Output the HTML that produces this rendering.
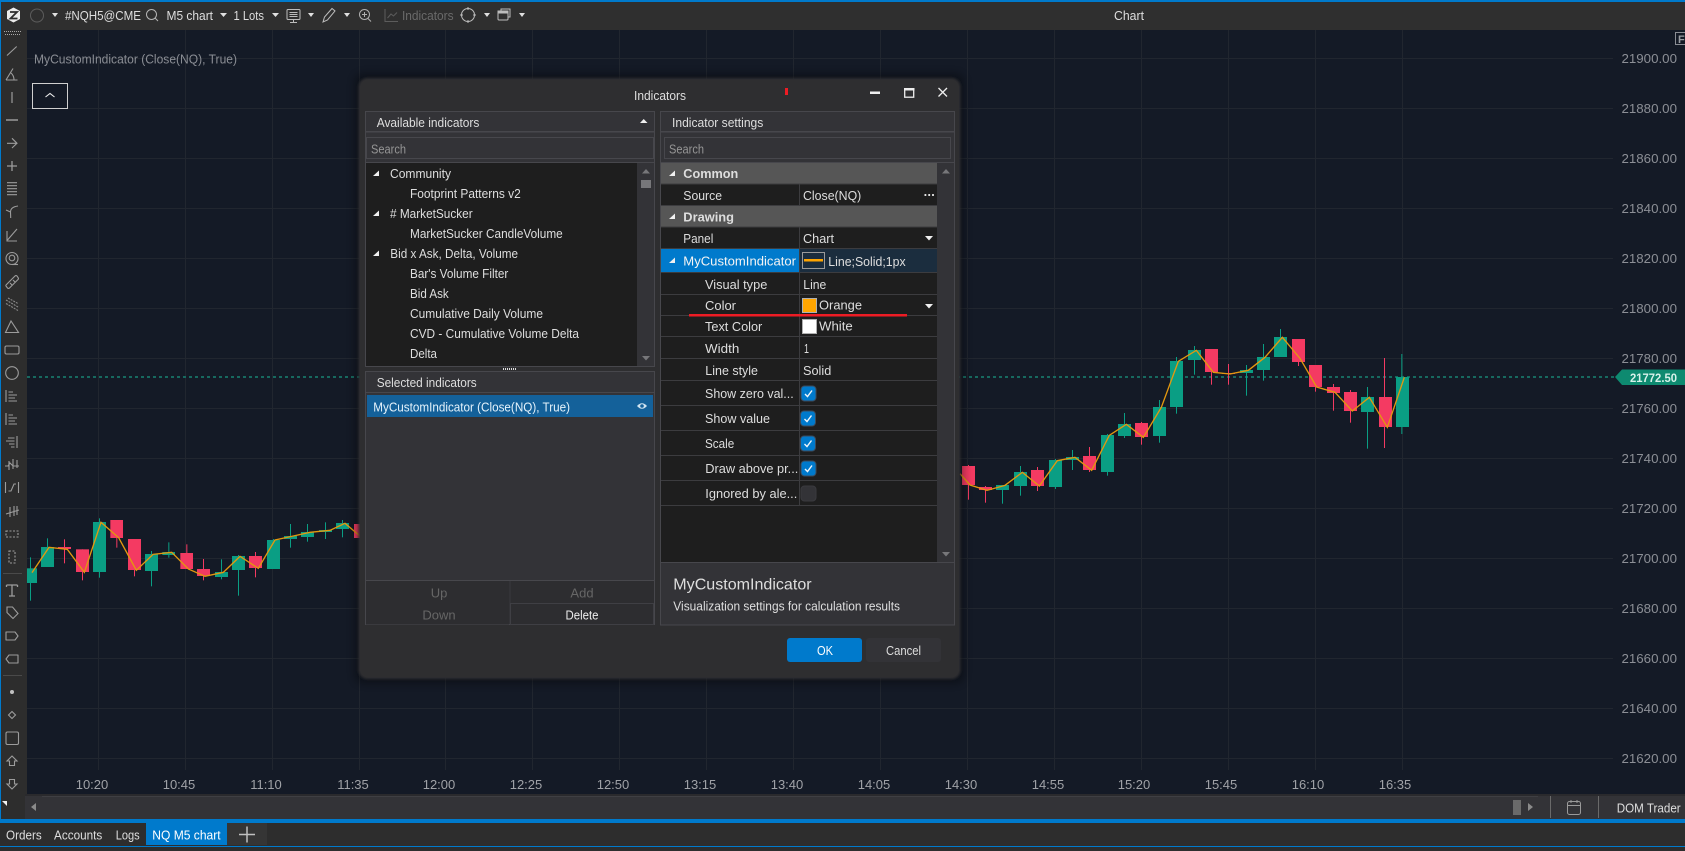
<!DOCTYPE html>
<html><head><meta charset="utf-8"><title>Chart</title>
<style>
html,body{margin:0;padding:0;background:#141a26;width:1685px;height:851px;overflow:hidden}
svg{display:block}
text{font-family:"Liberation Sans",sans-serif;font-size:13px;fill:#dedede}
.ax{fill:#8c8f96;font-size:13.3px}
.t{fill:#a0a2a7;font-size:13px;text-anchor:middle}
.dis{fill:#666;text-anchor:middle}
.ph{fill:#959595}
.b{font-weight:bold}
.ic{fill:none;stroke:#9c9c9c;stroke-width:1.1}
.g{fill:#0a9e84}.r{fill:#f43a62}
</style></head><body>
<svg xmlns="http://www.w3.org/2000/svg" width="1685" height="851" viewBox="0 0 1685 851">
<defs><filter id="sh" x="-5%" y="-5%" width="110%" height="110%"><feGaussianBlur stdDeviation="4"/></filter>
<filter id="sh2" x="-5%" y="-5%" width="110%" height="110%"><feGaussianBlur stdDeviation="1.2"/></filter></defs>
<rect width="1685" height="851" fill="#141a26"/>

<!-- grid -->
<g stroke="#21262f" stroke-width="1">
<path d="M27 58.5H1613M27 108.5H1613M27 158.5H1613M27 208.5H1613M27 258.5H1613M27 308.5H1613M27 358.5H1613M27 408.5H1613M27 458.5H1613M27 508.5H1613M27 558.5H1613M27 608.5H1613M27 658.5H1613M27 708.5H1613M27 758.5H1613"/>
<path d="M98.5 30V770M185.5 30V770M272.5 30V770M359.5 30V770M445.5 30V770M532.5 30V770M619.5 30V770M706.5 30V770M793.5 30V770M880.5 30V770M967.5 30V770M1054.5 30V770M1141.5 30V770M1228.5 30V770M1315.5 30V770M1402.5 30V770"/>
</g>
<path d="M27 377H1615" stroke="#17695f" stroke-width="2" stroke-dasharray="3 3"/>

<!-- candles left -->
<g transform="translate(0,500) scale(.33333)">
<g fill="#0a9e84">
<rect x="81" y="205" width="30" height="44"/><rect x="90" y="172" width="3" height="130"/>
<rect x="123" y="141" width="39" height="60"/><rect x="141" y="115" width="3" height="30"/>
<rect x="279" y="66" width="39" height="150"/><rect x="297" y="55" width="3" height="178"/>
<rect x="435" y="162" width="39" height="51"/><rect x="453" y="153" width="3" height="106"/>
<rect x="487" y="156" width="38" height="9"/><rect x="505" y="127" width="3" height="46"/>
<rect x="645" y="216" width="39" height="15"/><rect x="663" y="178" width="3" height="60"/>
<rect x="696" y="168" width="39" height="42"/><rect x="714" y="165" width="3" height="122"/>
<rect x="801" y="120" width="39" height="87"/><rect x="819" y="117" width="3" height="6"/>
<rect x="852" y="108" width="39" height="9"/><rect x="870" y="72" width="3" height="71"/>
<rect x="903" y="96" width="39" height="15"/><rect x="921" y="72" width="3" height="53"/>
<rect x="957" y="90" width="39" height="6"/><rect x="975" y="67" width="3" height="50"/>
<rect x="1008" y="69" width="39" height="18"/><rect x="1026" y="60" width="3" height="52"/>
</g>
<g fill="#f43a62">
<rect x="174" y="141" width="39" height="6"/><rect x="192" y="118" width="3" height="72"/>
<rect x="228" y="148" width="39" height="68"/><rect x="246" y="148" width="3" height="93"/>
<rect x="331" y="60" width="38" height="54"/><rect x="349" y="100" width="3" height="43"/>
<rect x="384" y="117" width="39" height="93"/><rect x="402" y="200" width="3" height="29"/>
<rect x="541" y="159" width="38" height="48"/><rect x="559" y="133" width="3" height="40"/>
<rect x="591" y="207" width="39" height="21"/><rect x="609" y="177" width="3" height="64"/>
<rect x="747" y="168" width="39" height="36"/><rect x="765" y="156" width="3" height="76"/>
<rect x="1062" y="72" width="18" height="42"/>
</g>
<polyline fill="none" stroke="#e3980f" stroke-width="4" points="96,218 147,142 202,148 253,217 303,67 356,113 409,211 459,163 515,157 565,207 615,229 670,217 720,169 775,205 825,120 880,108 930,97 990,91 1035,70 1080,108"/>
</g>

<!-- candles right -->
<g transform="translate(950,320) scale(.33333)">
<g fill="#0a9e84">
<rect x="138" y="495" width="39" height="15"/><rect x="156" y="495" width="3" height="56"/>
<rect x="192" y="456" width="39" height="42"/><rect x="210" y="438" width="3" height="89"/>
<rect x="297" y="420" width="39" height="81"/><rect x="315" y="417" width="3" height="90"/>
<rect x="348" y="411" width="39" height="9"/><rect x="366" y="390" width="3" height="60"/>
<rect x="453" y="345" width="39" height="111"/><rect x="471" y="342" width="3" height="125"/>
<rect x="504" y="312" width="39" height="36"/><rect x="522" y="279" width="3" height="75"/>
<rect x="609" y="261" width="39" height="87"/><rect x="627" y="240" width="3" height="128"/>
<rect x="660" y="123" width="39" height="138"/><rect x="678" y="111" width="3" height="170"/>
<rect x="714" y="90" width="39" height="30"/><rect x="732" y="78" width="3" height="86"/>
<rect x="870" y="150" width="39" height="9"/><rect x="888" y="135" width="3" height="92"/>
<rect x="921" y="111" width="39" height="39"/><rect x="939" y="72" width="3" height="110"/>
<rect x="972" y="51" width="39" height="60"/><rect x="990" y="27" width="3" height="30"/>
<rect x="1233" y="231" width="39" height="45"/><rect x="1251" y="201" width="3" height="185"/>
<rect x="1338" y="171" width="39" height="150"/><rect x="1354" y="102" width="3" height="240"/>
</g>
<g fill="#f43a62">
<rect x="36" y="438" width="39" height="57"/><rect x="54" y="435" width="3" height="104"/>
<rect x="87" y="501" width="39" height="9"/><rect x="105" y="498" width="3" height="50"/>
<rect x="243" y="450" width="39" height="48"/><rect x="261" y="441" width="3" height="72"/>
<rect x="399" y="408" width="39" height="42"/><rect x="417" y="381" width="3" height="75"/>
<rect x="555" y="309" width="39" height="42"/><rect x="573" y="306" width="3" height="68"/>
<rect x="765" y="87" width="39" height="69"/><rect x="783" y="87" width="3" height="107"/>
<rect x="816" y="159" width="39" height="3"/><rect x="834" y="132" width="3" height="62"/>
<rect x="1026" y="57" width="39" height="69"/><rect x="1044" y="57" width="3" height="81"/>
<rect x="1077" y="135" width="39" height="66"/><rect x="1095" y="135" width="3" height="80"/>
<rect x="1131" y="201" width="39" height="18"/><rect x="1149" y="192" width="3" height="80"/>
<rect x="1182" y="216" width="39" height="57"/><rect x="1200" y="210" width="3" height="98"/>
<rect x="1287" y="231" width="39" height="90"/><rect x="1302" y="114" width="3" height="270"/>
</g>
<polyline fill="none" stroke="#e3980f" stroke-width="4" points="30,461 60,495 111,511 165,496 217,457 268,498 322,422 375,412 425,451 478,346 529,313 580,352 634,262 685,124 739,91 790,157 840,162 895,151 945,112 997,52 1050,115 1100,201 1155,217 1207,273 1258,232 1312,322 1363,172"/>
</g>

<!-- axis labels -->
<g transform="translate(-.5,0)">
<text class="ax" x="1622" y="63">21900.00</text><text class="ax" x="1622" y="113">21880.00</text><text class="ax" x="1622" y="163">21860.00</text><text class="ax" x="1622" y="213">21840.00</text><text class="ax" x="1622" y="263">21820.00</text><text class="ax" x="1622" y="313">21800.00</text><text class="ax" x="1622" y="363">21780.00</text><text class="ax" x="1622" y="413">21760.00</text><text class="ax" x="1622" y="463">21740.00</text><text class="ax" x="1622" y="513">21720.00</text><text class="ax" x="1622" y="563">21700.00</text><text class="ax" x="1622" y="613">21680.00</text><text class="ax" x="1622" y="663">21660.00</text><text class="ax" x="1622" y="713">21640.00</text><text class="ax" x="1622" y="763">21620.00</text>
</g>
<polygon points="1615,377 1622,369.5 1685,369.5 1685,385 1622,385" fill="#0e8a70"/>
<text x="1630" y="382" style="fill:#d8f2ea;font-size:12px" textLength="47" lengthAdjust="spacingAndGlyphs" class="b">21772.50</text>
<rect x="1675.5" y="32.5" width="12" height="12" fill="none" stroke="#8a8d94"/>
<text x="1678" y="43" style="fill:#9a9da3;font-size:11px" class="b">F</text>

<text class="t" x="92" y="789">10:20</text><text class="t" x="179" y="789">10:45</text><text class="t" x="266" y="789">11:10</text><text class="t" x="353" y="789">11:35</text><text class="t" x="439" y="789">12:00</text><text class="t" x="526" y="789">12:25</text><text class="t" x="613" y="789">12:50</text><text class="t" x="700" y="789">13:15</text><text class="t" x="787" y="789">13:40</text><text class="t" x="874" y="789">14:05</text><text class="t" x="961" y="789">14:30</text><text class="t" x="1048" y="789">14:55</text><text class="t" x="1134" y="789">15:20</text><text class="t" x="1221" y="789">15:45</text><text class="t" x="1308" y="789">16:10</text><text class="t" x="1395" y="789">16:35</text>

<text x="34" y="63.5" style="fill:#8a8d94;font-size:12.5px" textLength="203" lengthAdjust="spacingAndGlyphs">MyCustomIndicator (Close(NQ), True)</text>
<rect x="32.5" y="83.5" width="35" height="25" fill="#141a26" stroke="#d0d0d0"/>
<path d="M45.5 97L50 93.5L54.5 97" fill="none" stroke="#eee" stroke-width="1.1"/>

<!-- top toolbar -->
<rect x="0" y="0" width="1685" height="30" fill="#2f2f2f"/>
<rect x="0" y="0" width="1685" height="2" fill="#007acc"/>
<polygon points="13.500,7.500 20,11 20,19 13.500,22.500 7,19 7,11" fill="#ececec"/><path d="M10 12H17L10.500 18.500H17.500" fill="none" stroke="#2f2f2f" stroke-width="1.800"/>
<circle cx="37" cy="15.5" r="6.5" fill="none" stroke="#5c5c5c"/>
<polygon points="52,13 58,13 55,17" fill="#e0e0e0"/>
<text x="65" y="20" textLength="76" lengthAdjust="spacingAndGlyphs">#NQH5@CME</text>
<circle cx="151.5" cy="14.5" r="5" fill="none" stroke="#b5b5b5"/><path d="M155 18L158 21" stroke="#b5b5b5"/>
<text x="166.500" y="20" textLength="46.500" lengthAdjust="spacingAndGlyphs">M5 chart</text>
<polygon points="220,13 227,13 223.500,17" fill="#e0e0e0"/>
<text x="233.500" y="20" textLength="30.500" lengthAdjust="spacingAndGlyphs">1 Lots</text>
<polygon points="272,13 279,13 275.500,17" fill="#e0e0e0"/>
<g fill="none" stroke="#bcbcbc"><rect x="287" y="9.500" width="13" height="10" rx="1"/><path d="M289.500 12.500H297.500M289.500 14.500H297.500M289.500 16.500H297.500M293.500 20V22M290 22.500H297"/></g>
<polygon points="308,13 314,13 311,17" fill="#e0e0e0"/>
<path d="M323 22L324.500 17L332 8.500L335 11L327.500 20Z" fill="none" stroke="#bcbcbc"/>
<polygon points="344,13 350,13 347,17" fill="#e0e0e0"/>
<g fill="none" stroke="#b0b0b0"><circle cx="364.500" cy="14.500" r="5"/><path d="M362 14.500H367M364.500 12V17M368 18.500L371 21.500"/></g>
<g fill="none" stroke="#5c5c5c"><path d="M385 9V21.500H398M387.500 18L391 14L393.500 16L397 12.500"/></g>
<text x="402" y="20" style="fill:#6a6a6a" textLength="51.600" lengthAdjust="spacingAndGlyphs">Indicators</text>
<g fill="none" stroke="#bcbcbc"><circle cx="468" cy="15" r="6.500"/><path d="M468 7V10M468 20V23M460 15H463M473 15H476"/></g>
<polygon points="484,13 490,13 487,17" fill="#e0e0e0"/>
<g fill="none" stroke="#bcbcbc"><rect x="498" y="11" width="10" height="9" rx="1"/><path d="M501 11V9H510V17H508"/><path d="M498 11H508V13H498Z" fill="#bcbcbc"/></g>
<polygon points="519,13 525,13 522,17" fill="#e0e0e0"/>
<text x="1114" y="20" textLength="30" lengthAdjust="spacingAndGlyphs">Chart</text>

<!-- left toolbar -->
<rect x="0" y="30" width="27" height="789" fill="#2d2d2d"/>
<rect x="0" y="0" width="1" height="823" fill="#007acc"/>
<path d="M4 31.500H21M5 34.500H21" stroke="#a8a8a8" stroke-dasharray="1 1"/>
<g class="ic">
<path d="M7 55.500L16.700 46.500"/>
<path d="M6 80L13 68.500M6 80H17.500M11 73Q14 75.500 14 80"/>
<path d="M12 92V103" stroke-width="1.800" stroke="#777"/>
<path d="M6 120H18" stroke-width="1.800" stroke="#888"/>
<path d="M7 143.300H17M12 138.300L17 143.300L12 148"/>
<path d="M7 166H17M12 161V171" stroke-width="1.300"/>
<path d="M7 182.700H17M7 185.700H17M7 188.700H17M7 191.700H17M7 194.700H17"/>
<path d="M10.700 218L10.500 212Q10.500 207 18 206M6 210L10.500 212"/>
<path d="M7.500 240L17 229M7 231V241H17"/>
<circle cx="12" cy="258.500" r="6"/><circle cx="12" cy="258" r="2.800"/><path d="M12 264.500H18"/>
<path d="M6.500 284.500L15 276Q16 275 17 276L18 277.500Q19 278.500 18 279.500L9.500 288Q8.500 289 7.500 288L6 286Q5.500 285.500 6.500 284.500ZM10 283L12 285M13 280L15 282"/>
<path d="M6 300L18 307M6 303.500L18 310.500M8 298L18 303.500" stroke-dasharray="2 1" stroke="#888"/>
<path d="M5.500 332.500L11 321L18.500 332.500Z"/>
<rect x="5" y="346" width="14" height="8" rx="1.500"/>
<circle cx="12" cy="373" r="6.300"/>
<path d="M6 390V402M8.500 392H13M8.500 395H17M8.500 398H15M8.500 401H17"/>
<path d="M6 413V425M8.500 415H13M8.500 418H17M8.500 421H15M8.500 424H17"/>
<path d="M17 436V448M14.500 438H8M14.500 441H6M14.500 444H9M14.500 447H11"/>
<path d="M5 466H8L10 463L13 466H19M9 461V470M13 459V469M17 460V468"/>
<path d="M5.500 482V493M18.500 482V493M8.500 491H11L14 484H16"/>
<path d="M6 514L19 510M10 507V517M14 506V516M17 506V515"/>
<rect x="6" y="531" width="12" height="6" stroke-dasharray="2 1.500"/>
<rect x="9" y="551" width="6" height="12" stroke-dasharray="2 1.500"/>
<path d="M6.500 585H17.500M12 585V596M9 596H15M6.500 585V587M17.500 585V587" stroke-width="1.300"/>
<path d="M7 607H12.500L18 613.500L13 618.500L7 612.500Z"/>
<path d="M6 632H15L18 636L15 640H6Z" stroke-linejoin="round"/>
<path d="M18 655H9L6 659L9 663H18Z" stroke-linejoin="round"/>
<path d="M12 711.500L15.500 715L12 718.500L8.500 715Z"/>
<rect x="6" y="732" width="12.500" height="12.500" rx="1.500"/>
<path d="M12 756L17 761H14.500V765.500H9.500V761H7Z"/>
<path d="M9.500 779.500H14.500V784H17L12 789L7 784H9.500Z"/>
</g>
<path d="M3 573.500H22M3 675.500H22" stroke="#4a4a4a"/>
<circle cx="12" cy="692" r="2" fill="#c0c0c0"/>
<polygon points="2,801 7,801 7,806" fill="#f0f0f0"/>

<!-- bottom scroll -->
<rect x="25" y="794" width="1660" height="25" fill="#333337"/>
<rect x="25" y="794" width="1660" height="2" fill="#2a2a2d"/>
<path d="M42 796.500H1538" stroke="#3f3f43"/>
<polygon points="36,803 36,811 31,807" fill="#8a8a8a"/>
<rect x="1513" y="800" width="8" height="15" fill="#6a6a6a"/>
<polygon points="1528,803 1528,811 1533,807" fill="#8a8a8a"/>
<path d="M1550.500 796V818M1598.500 796V818" stroke="#6a6a6a"/>
<g fill="none" stroke="#9a9a9a"><rect x="1567.500" y="801.500" width="13" height="13" rx="2"/><path d="M1567.500 805.500H1580.500M1571 800V803M1577 800V803"/></g>
<text x="1616.700" y="812.500" textLength="64" lengthAdjust="spacingAndGlyphs">DOM Trader</text>

<!-- bottom tabs -->
<rect x="0" y="819" width="1685" height="4" fill="#007acc"/>
<rect x="0" y="823" width="1685" height="23" fill="#2d2d2d"/>
<rect x="0" y="846" width="1685" height="1" fill="#007acc"/>
<rect x="0" y="847" width="1685" height="4" fill="#2d2d2d"/>
<text x="6" y="839.500" textLength="35.700" lengthAdjust="spacingAndGlyphs">Orders</text>
<text x="54" y="839.500" textLength="48.300" lengthAdjust="spacingAndGlyphs">Accounts</text>
<text x="115.700" y="839.500" textLength="24" lengthAdjust="spacingAndGlyphs">Logs</text>
<rect x="146" y="823" width="81" height="22" fill="#007acc"/>
<text x="152.300" y="839.500" textLength="68.300" lengthAdjust="spacingAndGlyphs" style="fill:#fff">NQ M5 chart</text>
<rect x="227" y="823" width="40" height="22" fill="#353535"/>
<path d="M239 834.500H255M247 826.500V842.500" stroke="#c0c0c0" stroke-width="1.500"/>

<!-- dialog -->
<rect x="354" y="73" width="611" height="611" rx="10" fill="#000" opacity=".3" filter="url(#sh)"/>
<rect x="358.500" y="78" width="602" height="601" rx="9" fill="#2e2e30" filter="url(#sh2)"/>
<rect x="360" y="79.500" width="599" height="598" rx="8" fill="#2e2e30"/>
<text x="634" y="100" textLength="52" lengthAdjust="spacingAndGlyphs">Indicators</text>
<rect x="785" y="88" width="3" height="7" fill="#ed1c24"/>
<rect x="870" y="91.500" width="10" height="2.500" fill="#eee"/>
<rect x="904.700" y="88.700" width="9" height="8.500" fill="none" stroke="#eee" stroke-width="1.300"/><rect x="904" y="88" width="10.500" height="2.500" fill="#eee"/>
<path d="M938.500 88L947 96.500M947 88L938.500 96.500" stroke="#eee" stroke-width="1.300"/>

<!-- left panel -->
<rect x="365.500" y="111.500" width="289" height="20" fill="#333337" stroke="#47474c"/>
<text x="376.700" y="126.800" textLength="102.700" lengthAdjust="spacingAndGlyphs">Available indicators</text>
<polygon points="640,123 647.500,123 643.700,119" fill="#f0f0f0"/>
<rect x="365.500" y="132" width="289" height="234.500" fill="#333337" stroke="#47474c"/>
<rect x="366.500" y="137.500" width="287" height="21" fill="#333337" stroke="#47474c"/>
<text class="ph" x="371" y="153.500" textLength="35" lengthAdjust="spacingAndGlyphs">Search</text>
<path d="M366 162.500H654" stroke="#47474c"/>
<rect x="366" y="163" width="271" height="203" fill="#1e1e1e"/>
<polygon points="642,173.500 650,173.500 646,169" fill="#77777a"/><rect x="641" y="180" width="10" height="8" fill="#77777a"/><polygon points="642,356 650,356 646,360.500" fill="#77777a"/>
<polygon points="373,176 379,176 379,170.500" fill="#f0f0f0"/><polygon points="373,216 379,216 379,210.500" fill="#f0f0f0"/><polygon points="373,256 379,256 379,250.500" fill="#f0f0f0"/>
<g transform="translate(0,-.6)">
<text x="390" y="178.500" textLength="61" lengthAdjust="spacingAndGlyphs">Community</text>
<text x="410" y="198.500" textLength="110.700" lengthAdjust="spacingAndGlyphs">Footprint Patterns v2</text>
<text x="390" y="218.500" textLength="82.700" lengthAdjust="spacingAndGlyphs"># MarketSucker</text>
<text x="410" y="238.500" textLength="152.700" lengthAdjust="spacingAndGlyphs">MarketSucker CandleVolume</text>
<text x="390.300" y="258.500" textLength="127.700" lengthAdjust="spacingAndGlyphs">Bid x Ask, Delta, Volume</text>
<text x="410" y="278.500" textLength="98.300" lengthAdjust="spacingAndGlyphs">Bar's Volume Filter</text>
<text x="410" y="298.500" textLength="38.700" lengthAdjust="spacingAndGlyphs">Bid Ask</text>
<text x="410" y="318.500" textLength="133" lengthAdjust="spacingAndGlyphs">Cumulative Daily Volume</text>
<text x="410" y="338.500" textLength="169" lengthAdjust="spacingAndGlyphs">CVD - Cumulative Volume Delta</text>
<text x="410" y="358.500" textLength="27" lengthAdjust="spacingAndGlyphs">Delta</text>
</g>
<path d="M503 369H516" stroke="#ddd" stroke-width="2" stroke-dasharray="1 1"/>

<rect x="365.500" y="371.500" width="289" height="253" fill="#333337" stroke="#47474c"/>
<path d="M366 392.500H654M366 580.500H654" stroke="#47474c"/>
<text x="376.700" y="387.200" textLength="100" lengthAdjust="spacingAndGlyphs">Selected indicators</text>
<rect x="367" y="395" width="286" height="22" fill="#14619a"/>
<text x="373.300" y="411.500" textLength="196.700" lengthAdjust="spacingAndGlyphs" style="fill:#e4f2fb">MyCustomIndicator (Close(NQ), True)</text>
<path d="M637 406Q642 400.500 647 406Q642 411.500 637 406Z" fill="#cfe3f0"/><circle cx="642" cy="406" r="1.800" fill="#14619a"/>
<rect x="366" y="581" width="143" height="22" fill="#2d2d30"/><rect x="511" y="581" width="143" height="22" fill="#2d2d30"/><rect x="366" y="603" width="143" height="21.500" fill="#2d2d30"/>
<rect x="510.500" y="603.500" width="143" height="21" fill="#2d2d30" stroke="#3f3f44"/>
<text class="dis" x="439" y="597.500">Up</text><text class="dis" x="582" y="597.500">Add</text><text class="dis" x="439" y="619.500">Down</text>
<text x="582" y="619.500" text-anchor="middle" textLength="33" lengthAdjust="spacingAndGlyphs" style="fill:#ececec">Delete</text>

<!-- right panel -->
<rect x="660.500" y="111.500" width="294" height="20" fill="#333337" stroke="#47474c"/>
<text x="672" y="126.800" textLength="91.300" lengthAdjust="spacingAndGlyphs">Indicator settings</text>
<rect x="660.500" y="132" width="294" height="493" fill="#333337" stroke="#47474c"/>
<rect x="664.500" y="137.500" width="286" height="21" fill="#333337" stroke="#47474c"/>
<text class="ph" x="669" y="153.500" textLength="35" lengthAdjust="spacingAndGlyphs">Search</text>
<path d="M661 162.500H954" stroke="#47474c"/>
<rect x="661" y="163" width="276" height="399" fill="#1e1e1e"/>
<path d="M661 562.500H954" stroke="#47474c"/>
<rect x="661" y="163" width="276" height="20.500" fill="#565656"/>
<rect x="661" y="206" width="276" height="20.500" fill="#565656"/>
<rect x="661" y="249" width="138" height="23" fill="#007acc"/>
<rect x="799" y="249" width="138" height="23" fill="#1b2d3e"/>
<path d="M661 184H937M661 205.500H937M661 227H937M661 248.500H937M661 272.500H937M661 294.500H937M661 315.500H937M661 336.500H937M661 358.500H937M661 380.500H937M661 405.500H937M661 430.500H937M661 455.500H937M661 480.500H937M661 505.500H937" stroke="#3c3c3f"/>
<path d="M799.500 184V206M799.500 227V505" stroke="#3c3c3f"/>
<polygon points="942,173.500 950,173.500 946,169" fill="#77777a"/><polygon points="942,552 950,552 946,556.500" fill="#77777a"/>
<polygon points="669,176 675,176 675,170.500" fill="#f0f0f0"/><polygon points="669,219 675,219 675,213.500" fill="#f0f0f0"/><polygon points="669,263 675,263 675,257.500" fill="#f0f0f0"/>

<text class="b" x="683.300" y="178" textLength="55" lengthAdjust="spacingAndGlyphs">Common</text>
<text x="683.300" y="200" textLength="38.700" lengthAdjust="spacingAndGlyphs">Source</text>
<text x="803" y="200" textLength="58.300" lengthAdjust="spacingAndGlyphs">Close(NQ)</text>
<path d="M924.500 195H934" stroke="#fff" stroke-width="1.800" stroke-dasharray="1.800 2"/>
<text class="b" x="683.300" y="221.500" textLength="50.700" lengthAdjust="spacingAndGlyphs">Drawing</text>
<text x="683.300" y="243" textLength="30" lengthAdjust="spacingAndGlyphs">Panel</text>
<text x="803" y="243" textLength="31" lengthAdjust="spacingAndGlyphs">Chart</text>
<polygon points="925,236 933,236 929,240.500" fill="#f0f0f0"/>
<text x="683.300" y="265.500" textLength="112.700" lengthAdjust="spacingAndGlyphs" style="fill:#f4f4f4">MyCustomIndicator</text>
<rect x="802.500" y="252.500" width="22" height="16" fill="none" stroke="#9a9a9a"/>
<rect x="804" y="259" width="19" height="2.500" fill="#ffa500"/>
<text x="828.300" y="266" textLength="77.300" lengthAdjust="spacingAndGlyphs">Line;Solid;1px</text>
<text x="705" y="289" textLength="62.300" lengthAdjust="spacingAndGlyphs">Visual type</text>
<text x="803.300" y="289" textLength="23" lengthAdjust="spacingAndGlyphs">Line</text>
<text x="705" y="310" textLength="31" lengthAdjust="spacingAndGlyphs">Color</text>
<rect x="802.500" y="298.500" width="14" height="14" fill="#ffa500" stroke="#b0b0b0"/>
<text x="819" y="309.500" textLength="43" lengthAdjust="spacingAndGlyphs">Orange</text>
<polygon points="925,304 933,304 929,308.500" fill="#f0f0f0"/>
<text x="705" y="331" textLength="57.300" lengthAdjust="spacingAndGlyphs">Text Color</text>
<rect x="802.500" y="319.500" width="14" height="14" fill="#fff" stroke="#b0b0b0"/>
<text x="819" y="330.500" textLength="33.700" lengthAdjust="spacingAndGlyphs">White</text>
<text x="705" y="353" textLength="34.300" lengthAdjust="spacingAndGlyphs">Width</text>
<text x="804" y="353" textLength="5" lengthAdjust="spacingAndGlyphs">1</text>
<text x="705.300" y="375" textLength="52.700" lengthAdjust="spacingAndGlyphs">Line style</text>
<text x="803" y="375" textLength="28.300" lengthAdjust="spacingAndGlyphs">Solid</text>
<text x="705" y="398" textLength="88.700" lengthAdjust="spacingAndGlyphs">Show zero val...</text>
<text x="705" y="423" textLength="65" lengthAdjust="spacingAndGlyphs">Show value</text>
<text x="705" y="448" textLength="29.300" lengthAdjust="spacingAndGlyphs">Scale</text>
<text x="705.300" y="473" textLength="93" lengthAdjust="spacingAndGlyphs">Draw above pr...</text>
<text x="705.300" y="498" textLength="92" lengthAdjust="spacingAndGlyphs">Ignored by ale...</text>
<g fill="#007acc" stroke="#3c4b5c"><rect x="801" y="386" width="15" height="15" rx="3.500"/><rect x="800.500" y="411" width="15" height="15" rx="3.500"/><rect x="800.500" y="436" width="15" height="15" rx="3.500"/><rect x="801" y="461" width="15" height="15" rx="3.500"/></g>
<path d="M805 394L807.500 396.500L812 390.500M804.500 419L807 421.500L811.500 415.500M804.500 444L807 446.500L811.500 440.500M805 469L807.500 471.500L812 465.500" fill="none" stroke="#f0f6fb" stroke-width="1.400"/>
<rect x="801" y="486" width="15" height="15" rx="3.500" fill="#333337" stroke="#3a3a3e"/>
<rect x="689" y="314" width="218" height="2.500" fill="#ed1c24"/>

<text x="673.300" y="589.500" style="font-size:16px" textLength="138.300" lengthAdjust="spacingAndGlyphs">MyCustomIndicator</text>
<text x="673.300" y="610.500" style="font-size:12.500px" textLength="226.700" lengthAdjust="spacingAndGlyphs">Visualization settings for calculation results</text>

<rect x="787" y="638" width="75" height="24" rx="3" fill="#007acc"/>
<text x="817" y="655" textLength="16" lengthAdjust="spacingAndGlyphs" style="fill:#fff">OK</text>
<rect x="866" y="638" width="75" height="24" rx="3" fill="#333337"/>
<text x="886" y="655" textLength="35" lengthAdjust="spacingAndGlyphs">Cancel</text>
</svg>
</body></html>
